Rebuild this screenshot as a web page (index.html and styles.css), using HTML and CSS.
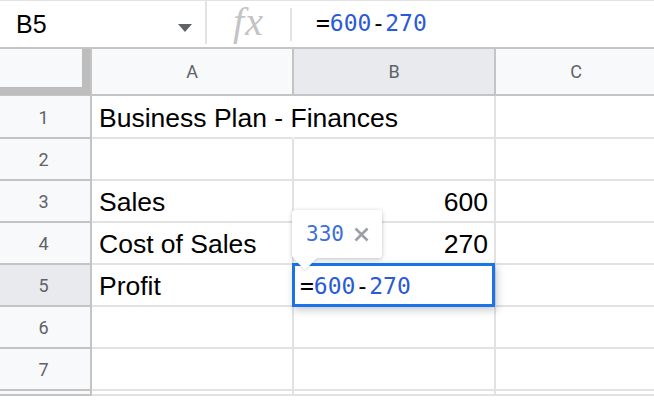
FILE: index.html
```html
<!DOCTYPE html>
<html>
<head>
<meta charset="utf-8">
<link rel="stylesheet" href="styles.css">
</head>
<body>
<div class="app">
  <div class="toolbar">
    <div class="namebox">
      <span class="name">B5</span>
      <span class="caret"></span>
    </div>
    <div class="sep"></div>
    <div class="fx">fx</div>
    <div class="sep short"></div>
    <div class="formula"><span class="eq">=</span><span class="num">600</span><span class="op">-</span><span class="num">270</span></div>
  </div>
  <div class="sheet">
    <div class="corner"></div>
    <div class="colh">A</div>
    <div class="colh sel">B</div>
    <div class="colh last">C</div>

    <div class="rowh first">1</div>
    <div class="cell first span">Business Plan - Finances</div>
    <div class="cell first"></div>
    <div class="cell first last"></div>

    <div class="rowh">2</div>
    <div class="cell"></div>
    <div class="cell"></div>
    <div class="cell last"></div>

    <div class="rowh">3</div>
    <div class="cell">Sales</div>
    <div class="cell right">600</div>
    <div class="cell last"></div>

    <div class="rowh">4</div>
    <div class="cell">Cost of Sales</div>
    <div class="cell right">270</div>
    <div class="cell last"></div>

    <div class="rowh sel">5</div>
    <div class="cell">Profit</div>
    <div class="cell active">
      <div class="editor"><span class="eq">=</span><span class="num">600</span><span class="op">-</span><span class="num">270</span></div>
      <div class="tip">
        <span class="tipval">330</span>
        <svg class="close" width="15" height="15" viewBox="0 0 15 15"><path d="M1.5 1.5 L13.5 13.5 M13.5 1.5 L1.5 13.5" stroke="#9aa0a6" stroke-width="2.6" fill="none"/></svg>
      </div>
    </div>
    <div class="cell last"></div>

    <div class="rowh">6</div>
    <div class="cell"></div>
    <div class="cell"></div>
    <div class="cell last"></div>

    <div class="rowh">7</div>
    <div class="cell"></div>
    <div class="cell"></div>
    <div class="cell last"></div>

    <div class="rowh"></div>
    <div class="cell"></div>
    <div class="cell"></div>
    <div class="cell last"></div>
  </div>
</div>
</body>
</html>
```
FILE: styles.css
```css
* { box-sizing: border-box; }
html, body { margin: 0; padding: 0; background: #fff; }
body { width: 654px; height: 400px; overflow: hidden; font-family: "Liberation Sans", Arial, sans-serif; }

.toolbar {
  height: 47px;
  border-top: 1px solid #e3e3e3;
  display: flex;
  align-items: stretch;
}
.namebox {
  width: 205px;
  display: flex;
  align-items: center;
  padding-left: 16px;
  padding-right: 13px;
}
.name { font-size: 25px; color: #000; flex: 1; padding-top: 1px; }
.caret {
  width: 0; height: 0;
  border-left: 7.5px solid transparent;
  border-right: 7.5px solid transparent;
  border-top: 8px solid #5f6368;
  margin-top: 7px;
}
.sep { width: 2px; background: #e3e3e3; margin-bottom: 3px; }
.sep.short { margin: 7px 0 6px; }
.fx {
  width: 83px;
  display: flex;
  align-items: center;
  justify-content: center;
  font-family: "Liberation Serif", serif;
  font-style: italic;
  font-size: 40px;
  color: #c4c4c4;
  padding-bottom: 5px;
  letter-spacing: 1px;
}
.formula {
  padding-left: 24px;
  display: flex;
  align-items: center;
  font-family: "DejaVu Sans Mono", monospace;
  font-size: 23px;
  padding-bottom: 2px;
}
.eq, .op { color: #000; }
.num { color: #2a5bd6; }

.sheet {
  display: grid;
  grid-template-columns: 92px 202px 202px 160px;
  grid-template-rows: 49px 43px repeat(6, 42px);
}
.corner {
  background: #f8f9fa;
  border-top: 2px solid #c4c4c4;
  border-right: 2px solid #c4c4c4;
  box-shadow: inset -8px -8px 0 #bdbdbd;
  border-bottom: 1px solid #c4c4c4;
}
.colh {
  background: #f8f9fa;
  border-top: 2px solid #c4c4c4;
  border-right: 2px solid #c4c4c4;
  border-bottom: 2px solid #c4c4c4;
  display: flex;
  align-items: center;
  justify-content: center;
  font-family: Roboto, "Liberation Sans", sans-serif;
  font-size: 18px;
  color: #5f6368;
}
.colh.sel { background: #e8eaed; }
.colh.last { border-right: none; }
.rowh {
  background: #f8f9fa;
  border-right: 2px solid #c4c4c4;
  border-bottom: 2px solid #c4c4c4;
  display: flex;
  align-items: center;
  justify-content: center;
  font-family: Roboto, "Liberation Sans", sans-serif;
  font-size: 18px;
  color: #5f6368;
  padding-right: 3px;
}
.rowh.first { padding-top: 1px; }
.rowh.sel { background: #e8eaed; }
.cell {
  border-right: 2px solid #e2e2e3;
  border-bottom: 2px solid #e2e2e3;
  font-size: 26.5px;
  color: #000;
  padding: 3px 6px 0 7px;
  display: flex;
  align-items: center;
  white-space: nowrap;
  position: relative;
}
.cell.span { overflow: visible; z-index: 1; border-right-color: transparent; }
.cell.right { justify-content: flex-end; }
.cell.last { border-right: none; }

.editor {
  position: absolute;
  left: -2px; top: -2px;
  width: 203px; height: 44px;
  border: 3px solid #1a73e8;
  background: #fff;
  box-shadow: 2px 3px 8px rgba(0,0,0,0.22);
  display: flex;
  align-items: center;
  padding-left: 5px;
  padding-top: 1px;
  font-family: "DejaVu Sans Mono", monospace;
  font-size: 23px;
  z-index: 2;
}
.tip {
  position: absolute;
  left: -2px; top: -55px;
  width: 90px; height: 48px;
  background: #fff;
  border-radius: 3px;
  box-shadow: 0 1px 4px rgba(0,0,0,0.25);
  display: flex;
  align-items: center;
  padding-left: 14px;
  gap: 10px;
  z-index: 3;
}
.tip::after {
  content: "";
  position: absolute;
  left: 1px; top: 48px;
  width: 0; height: 0;
  border-left: 12px solid transparent;
  border-right: 12px solid transparent;
  border-top: 12px solid #fff;
  filter: drop-shadow(0 1px 1px rgba(0,0,0,0.15));
}
.tipval {
  font-family: "DejaVu Sans Mono", monospace;
  font-size: 21px;
  color: #3c6fd8;
}
.close { margin-top: 1px; }
```
